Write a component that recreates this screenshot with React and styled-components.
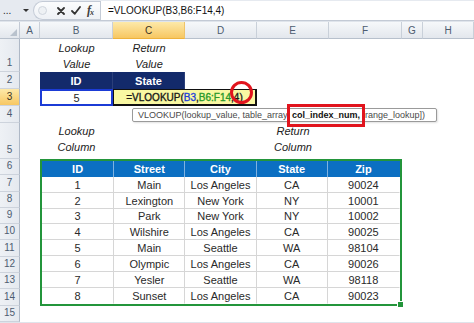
import React from 'react';
import styled, { createGlobalStyle, css } from 'styled-components';

const GlobalStyle = createGlobalStyle`
  html, body {
    margin: 0;
    padding: 0;
    background: #fff;
  }
  body {
    font-family: "Liberation Sans", Arial, sans-serif;
    overflow: hidden;
  }
`;

const Window = styled.div`
  width: 474px;
  height: 323px;
  overflow: hidden;
  display: flex;
  flex-direction: column;
  background: #dfe4eb;
`;

const FormulaBar = styled.div`
  display: flex;
  align-items: stretch;
  height: 19px;
  padding-top: 1px;
  background: #e6eaf0;
  border-bottom: 1px solid #c3cad5;
  margin-bottom: 1px;
`;

const NameBox = styled.div`
  width: 33px;
  display: flex;
  align-items: center;
  justify-content: space-between;
  padding: 0 4px 0 3px;
  box-sizing: border-box;
  font-size: 10px;
  color: #222;
`;

const Caret = styled.span`
  width: 0;
  height: 0;
  border-left: 3px solid transparent;
  border-right: 3px solid transparent;
  border-top: 3px solid #333;
`;

const FxPanel = styled.div`
  width: 67px;
  display: flex;
  align-items: center;
  padding-left: 4px;
  box-sizing: border-box;
  background: linear-gradient(#fbfcfd, #eef1f5);
  border: 1px solid #c4cbd6;
  border-right: none;
  border-radius: 10px 0 0 10px;
`;

const Knob = styled.span`
  width: 7px;
  height: 7px;
  border-radius: 50%;
  border: 1px solid #cfd5dd;
  background: #eef1f4;
  margin-right: 10px;
`;

const PanelIcon = styled.svg`
  margin-right: 6px;
  flex-shrink: 0;
`;

const Fx = styled.span`
  font-family: "Liberation Serif", "Times New Roman", serif;
  font-style: italic;
  font-weight: bold;
  font-size: 12px;
  color: #3d3d3d;
  letter-spacing: -1px;
  sub {
    font-size: 8px;
    vertical-align: -1px;
  }
`;

const FormulaInput = styled.div`
  flex: 1;
  display: flex;
  align-items: center;
  padding-left: 7px;
  background: #fff;
  border-left: 1px solid #c4cbd6;
  font-size: 10px;
  color: #111;
`;

const Sheet = styled.div`
  position: relative;
  display: grid;
  grid-template-columns: 20px 20px 73px 72px 72px 72px 73px 21px 1fr;
  grid-template-rows: 17px 33px 17px 17px 17px 36px repeat(10, 16.3px);
  background: #fff;
  font-size: 11px;
  color: #262626;
`;

const headBase = css`
  display: flex;
  justify-content: center;
  box-sizing: border-box;
  font-size: 10px;
  color: #4d5c70;
  background: linear-gradient(#f6f8fa, #e3e7ed);
`;

const activeHead = css`
  background: linear-gradient(#fde9a9, #f7c762);
  color: #3b3324;
`;

const Corner = styled.div`
  ${headBase};
  position: relative;
  border-right: 1px solid #c3cad5;
  border-bottom: 1px solid #b7c0cc;
  &::after {
    content: '';
    position: absolute;
    right: 2px;
    bottom: 2px;
    width: 7px;
    height: 7px;
    background: #b9c2cd;
    clip-path: polygon(100% 0, 100% 100%, 0 100%);
  }
`;

const ColHead = styled.div`
  ${headBase};
  align-items: center;
  border-right: 1px solid #c9d0d9;
  border-bottom: 1px solid #b7c0cc;
  ${p => p.$active && activeHead};
  ${p => p.$active && css`border-bottom-color: #eeb23c; border-right-color: #efc46a;`}
`;

const RowHead = styled.div`
  ${headBase};
  align-items: flex-end;
  padding-bottom: 2px;
  line-height: 12px;
  background: linear-gradient(90deg, #eef1f5, #e5e9ef);
  border-right: 1px solid #aeb8c6;
  border-bottom: 1px solid #cdd3dc;
  ${p => p.$active && activeHead};
`;

const Cell = styled.div`
  min-width: 0;
`;

const Label = styled.div`
  display: flex;
  flex-direction: column;
  justify-content: flex-end;
  align-items: center;
  font-style: italic;
  line-height: 16px;
  padding-bottom: ${p => p.$pad || 0}px;
  color: #222;
`;

const Navy = styled.div`
  display: flex;
  align-items: center;
  justify-content: center;
  background: #132a6b;
  color: #fff;
  font-weight: bold;
  border-right: 1px solid #2b3f7a;
`;

const RefCell = styled.div`
  display: flex;
  align-items: center;
  justify-content: center;
  border: 2px solid #1b3bd6;
  box-sizing: border-box;
`;

const EditCell = styled.div`
  grid-column: span 2;
  display: flex;
  align-items: center;
  justify-content: center;
  background: #f9f8a2;
  border: 1px solid #111;
  border-right-width: 2px;
  border-bottom-width: 2px;
  box-sizing: border-box;
  font-size: 10px;
  -webkit-text-stroke: 0.35px currentColor;
  color: #1a1a1a;
  white-space: nowrap;
`;

const Ref = styled.span`
  color: ${p => p.$color};
`;

const Circled = styled.span`
  position: relative;
  &::after {
    content: '';
    position: absolute;
    left: -1px;
    top: 50%;
    margin-top: -16px;
    width: 23px;
    height: 23px;
    box-sizing: border-box;
    border: 3px solid #e1141d;
    border-radius: 50%;
  }
`;

const DataTable = styled.div`
  grid-column: 3 / 8;
  grid-row: 7 / 16;
  position: relative;
  display: grid;
  grid-template-columns: 73fr 72fr 72fr 72fr 73fr;
  grid-template-rows: repeat(9, 1fr);
  border: 2px solid #23953b;
  &::after {
    content: '';
    position: absolute;
    right: -4px;
    bottom: -4px;
    width: 5px;
    height: 5px;
    background: #23953b;
    border: 1px solid #fff;
  }
`;

const TH = styled.div`
  display: flex;
  align-items: center;
  justify-content: center;
  background: #0b6fc2;
  color: #fff;
  font-weight: bold;
  border-right: 1px solid ${p => (p.$last ? 'transparent' : '#7fb2e0')};
`;

const TD = styled.div`
  display: flex;
  align-items: center;
  justify-content: center;
  padding-top: 1px;
  color: #2a2a2a;
  border-right: 1px solid ${p => (p.$last ? 'transparent' : '#d6d6d6')};
  border-bottom: 1px solid ${p => (p.$bottom ? 'transparent' : '#d6d6d6')};
  white-space: nowrap;
  overflow: hidden;
`;

const Tooltip = styled.div`
  position: absolute;
  left: 132px;
  top: 86px;
  width: 305px;
  height: 14px;
  box-sizing: border-box;
  padding: 0 5px;
  line-height: 12px;
  background: #fff;
  border: 1px solid #9a9a9a;
  border-radius: 2px;
  box-shadow: 1px 1px 2px rgba(0, 0, 0, 0.12);
  font-size: 9px;
  color: #4a4a4a;
  white-space: nowrap;
  z-index: 2;
`;

const Current = styled.span`
  position: relative;
  font-weight: bold;
  color: #111;
  &::after {
    content: '';
    position: absolute;
    left: -5px;
    right: -5px;
    top: -6px;
    bottom: -7px;
    border: 3px solid #e1141d;
  }
`;

const columns = ['A', 'B', 'C', 'D', 'E', 'F', 'G', 'H'];
const tableHead = ['ID', 'Street', 'City', 'State', 'Zip'];
const addresses = [
  [1, 'Main', 'Los Angeles', 'CA', '90024'],
  [2, 'Lexington', 'New York', 'NY', '10001'],
  [3, 'Park', 'New York', 'NY', '10002'],
  [4, 'Wilshire', 'Los Angeles', 'CA', '90025'],
  [5, 'Main', 'Seattle', 'WA', '98104'],
  [6, 'Olympic', 'Los Angeles', 'CA', '90026'],
  [7, 'Yesler', 'Seattle', 'WA', '98118'],
  [8, 'Sunset', 'Los Angeles', 'CA', '90023'],
];

const blanks = (n, key) => Array.from({ length: n }, (_, i) => <Cell key={`${key}-${i}`} />);

export default function App() {
  return (
    <Window>
      <GlobalStyle />
      <FormulaBar>
        <NameBox>
          <span>...</span>
          <Caret />
        </NameBox>
        <FxPanel>
          <Knob />
          <PanelIcon width="8" height="8" viewBox="0 0 8 8">
            <path d="M1 1L7 7M7 1L1 7" stroke="#333" strokeWidth="1.8" strokeLinecap="round" />
          </PanelIcon>
          <PanelIcon width="10" height="9" viewBox="0 0 10 9">
            <path d="M1 5L3.8 7.8L9 1" stroke="#333" strokeWidth="1.8" fill="none" strokeLinecap="round" strokeLinejoin="round" />
          </PanelIcon>
          <Fx>
            f<sub>x</sub>
          </Fx>
        </FxPanel>
        <FormulaInput>=VLOOKUP(B3,B6:F14,4)</FormulaInput>
      </FormulaBar>

      <Sheet>
        <Corner />
        {columns.map(c => (
          <ColHead key={c} $active={c === 'C'}>
            {c}
          </ColHead>
        ))}

        <RowHead>1</RowHead>
        <Cell />
        <Label>
          <span>Lookup</span>
          <span>Value</span>
        </Label>
        <Label>
          <span>Return</span>
          <span>Value</span>
        </Label>
        {blanks(5, 'r1')}

        <RowHead>2</RowHead>
        <Cell />
        <Navy>ID</Navy>
        <Navy>State</Navy>
        {blanks(5, 'r2')}

        <RowHead $active>3</RowHead>
        <Cell />
        <RefCell>5</RefCell>
        <EditCell>
          =VLOOKUP(<Ref $color="#1f3fd8">B3</Ref>,<Ref $color="#2b9a2b">B6:F14</Ref>
          <Circled>,4)</Circled>
        </EditCell>
        {blanks(4, 'r3')}

        <RowHead>4</RowHead>
        {blanks(8, 'r4')}

        <RowHead>5</RowHead>
        <Cell />
        <Label $pad={4}>
          <span>Lookup</span>
          <span>Column</span>
        </Label>
        {blanks(2, 'r5a')}
        <Label $pad={4}>
          <span>Return</span>
          <span>Column</span>
        </Label>
        {blanks(3, 'r5b')}

        <DataTable>
          {tableHead.map((h, i) => (
            <TH key={h} $last={i === tableHead.length - 1}>
              {h}
            </TH>
          ))}
          {addresses.map((row, r) =>
            row.map((value, i) => (
              <TD key={`${r}-${i}`} $last={i === row.length - 1} $bottom={r === addresses.length - 1}>
                {value}
              </TD>
            ))
          )}
        </DataTable>
        {[6, 7, 8, 9, 10, 11, 12, 13, 14].map(n => (
          <React.Fragment key={n}>
            <RowHead>{n}</RowHead>
            {blanks(3, `r${n}`)}
          </React.Fragment>
        ))}

        <RowHead>15</RowHead>
        {blanks(8, 'r15')}

        <Tooltip>
          VLOOKUP(lookup_value, table_array, <Current>col_index_num,</Current> [range_lookup])
        </Tooltip>
      </Sheet>
    </Window>
  );
}
